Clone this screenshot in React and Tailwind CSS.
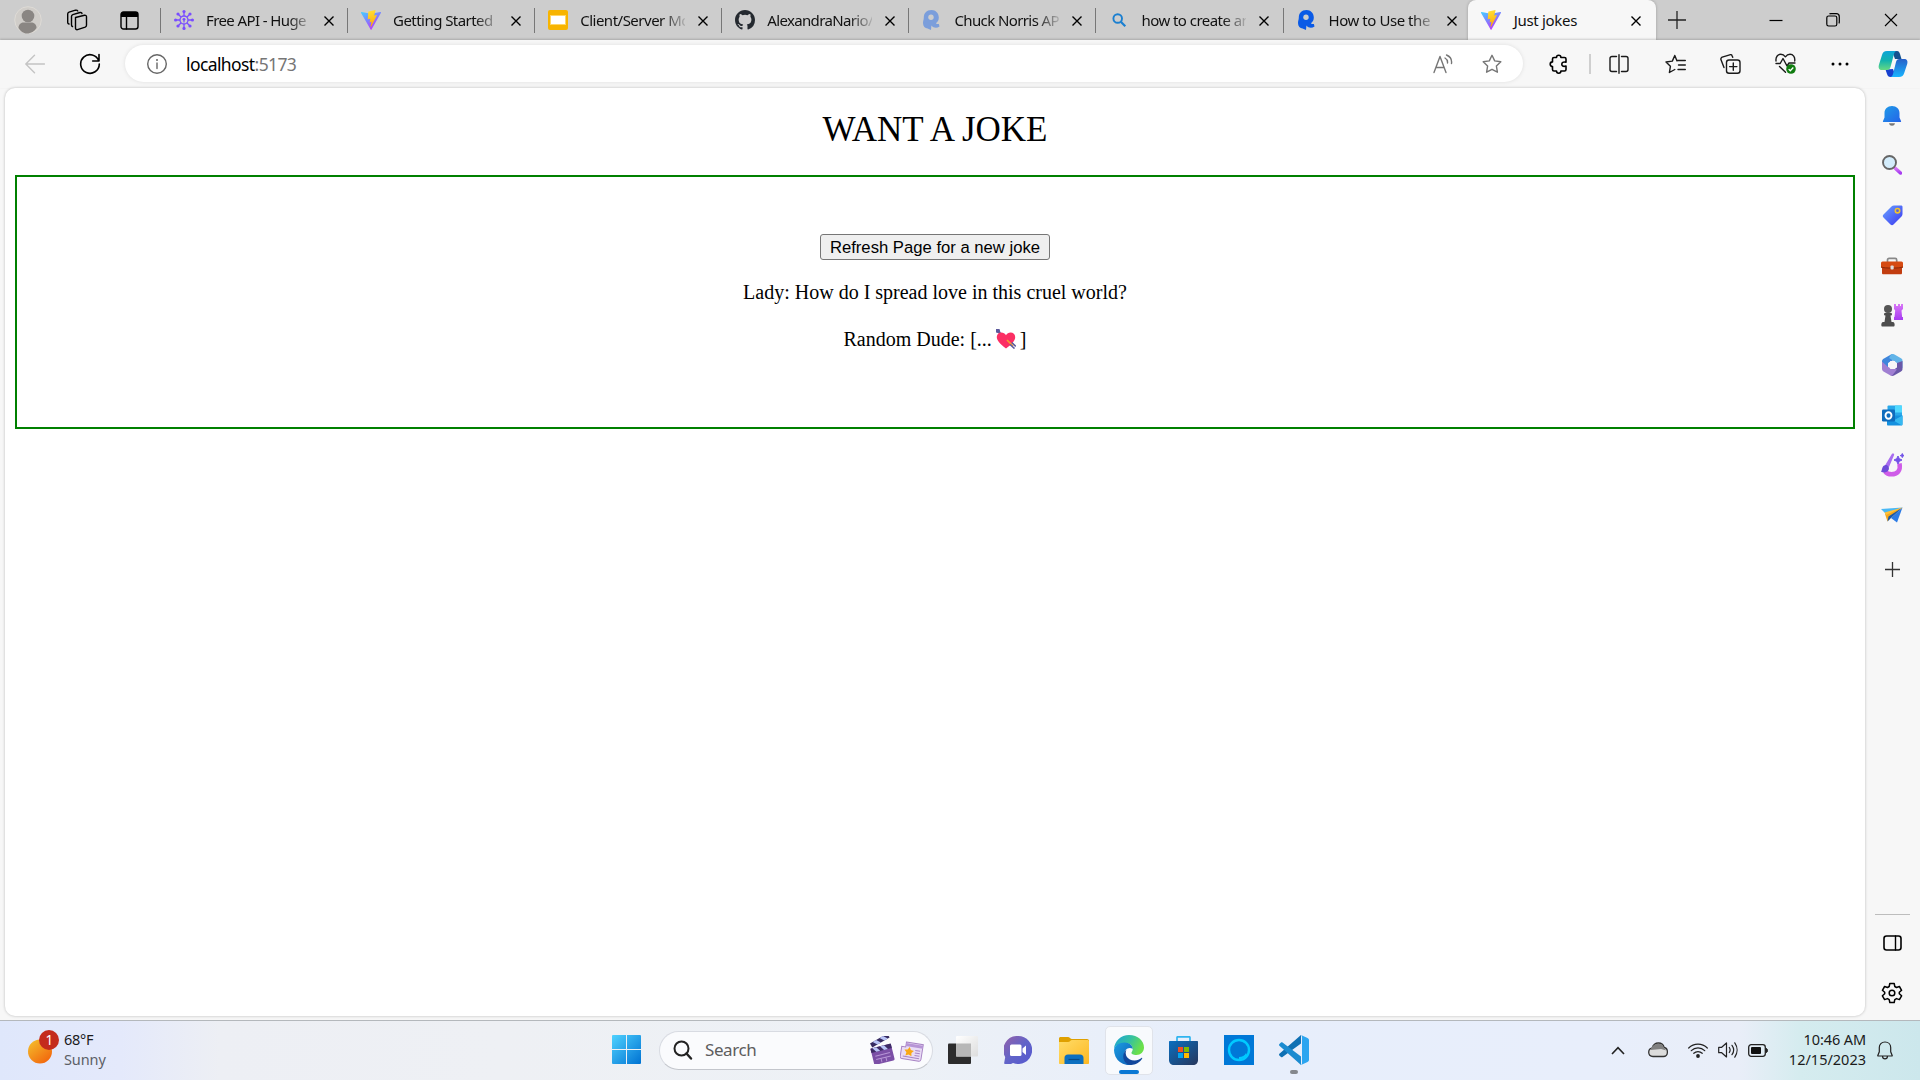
import React from "react";

const Icon = ({ w = 20, h = w, vb, className = "", children }) => (
  <svg
    width={w}
    height={h}
    viewBox={vb || `0 0 ${w} ${h}`}
    fill="none"
    stroke="none"
    className={"block shrink-0 " + className}
  >
    {children}
  </svg>
);

const line = { fill: "none", stroke: "currentColor", strokeWidth: 1.4, strokeLinecap: "round", strokeLinejoin: "round" };

const ViteIcon = ({ id }) => (
  <Icon w={20}>
    <defs>
      <linearGradient id={id + "a"} x1="0" y1="0" x2="0.6" y2="1">
        <stop offset="0" stopColor="#41d1ff" />
        <stop offset="1" stopColor="#bd34fe" />
      </linearGradient>
      <linearGradient id={id + "b"} x1="0.5" y1="0" x2="0.6" y2="1">
        <stop offset="0" stopColor="#ffdd35" />
        <stop offset="1" stopColor="#ffa800" />
      </linearGradient>
    </defs>
    <path d="M19.9 2.9 10.5 19.6a.5.5 0 0 1-.9 0L.1 2.9a.5.5 0 0 1 .5-.8l9.4 1.7 9.3-1.7a.5.5 0 0 1 .6.8z" fill={`url(#${id}a)`} />
    <path d="M14.3.1 7.5 1.4a.3.3 0 0 0-.2.3l-.5 7.2c0 .2.2.3.3.3l1.9-.4c.2 0 .4.1.3.3l-.6 2.8c0 .2.2.4.3.3l1.2-.4c.2 0 .4.2.3.3l-.9 4.4c0 .3.3.4.5.2l5.700-11.200c.1-.2 0-.4-.3-.4l-2 .4c-.2 0-.3-.1-.3-.3l1.300-4.500c.1-.2-.1-.6-.2-.6z" fill={`url(#${id}b)`} />
  </Icon>
);

const ApiIcon = () => (
  <Icon w={20}>
    <g stroke="#7a4dff" strokeWidth="1.3">
      <circle cx="10" cy="10" r="4" />
      <path d="M10 6V2M10 18v-4M6 10H2M18 10h-4M7.200 7.200 4 4M12.800 12.800 16 16M12.800 7.200 16 4M7.200 12.800 4 16" />
    </g>
    <g fill="#7a4dff">
      <circle cx="10" cy="9.300" r="1.400" />
      <path d="M9.400 10h1.200v2.400H9.400z" />
      {[[10, 1.6], [10, 18.4], [1.6, 10], [18.4, 10], [4, 4], [16, 16], [16, 4], [4, 16]].map(([x, y]) => (
        <circle key={x + "-" + y} cx={x} cy={y} r="1.600" />
      ))}
    </g>
  </Icon>
);

const SlidesIcon = () => (
  <Icon w={20}>
    <rect width="20" height="20" rx="2" fill="#f7b400" />
    <rect x="2" y="5" width="16" height="10" fill="#ffd666" />
    <rect x="3" y="6" width="14" height="8" fill="#fff" />
  </Icon>
);

const GithubIcon = () => (
  <Icon w={20} vb="0 0 16 16">
    <path
      fill="#24292f"
      d="M8 0C3.580 0 0 3.580 0 8c0 3.540 2.290 6.530 5.470 7.590.4.070.55-.170.55-.380 0-.190-.010-.820-.010-1.490-2.010.370-2.530-.490-2.690-.940-.090-.230-.480-.940-.820-1.130-.280-.150-.680-.520-.010-.530.630-.010 1.080.580 1.230.820.720 1.210 1.870.870 2.330.660.070-.520.280-.870.510-1.070-1.780-.200-3.640-.890-3.640-3.950 0-.870.310-1.590.820-2.150-.080-.200-.360-1.020.080-2.120 0 0 .670-.210 2.200.820a7.500 7.500 0 0 1 4 0c1.530-1.040 2.200-.820 2.200-.820.440 1.100.160 1.920.080 2.120.510.560.820 1.270.820 2.150 0 3.070-1.870 3.750-3.650 3.950.290.250.540.730.540 1.480 0 1.070-.010 1.930-.010 2.200 0 .210.150.460.550.380A8.010 8.010 0 0 0 16 8c0-4.420-3.580-8-8-8z"
    />
  </Icon>
);

const RapidIcon = ({ color }) => (
  <Icon w={20}>
    <path d="M9.500 0C4.500 0 1.800 3.300 1.800 7.500c0 2-.8 3.200-.8 5.500 0 3.500 2 5.200 4.600 5.400L9 20l.4-4.600c2 2.600 5.500 3 8.100 1l-.6-2.400c-1.200.3-2.300-.1-3-.8 2-1.400 2.900-3.400 2.900-5.700C16.800 3.300 13.800 0 9.500 0z" fill={color} />
    <circle cx="9" cy="7.200" r="2.700" fill="#cdcdcd" />
  </Icon>
);

const SearchTabIcon = () => (
  <Icon w={20}>
    <circle cx="8.700" cy="8.500" r="4.300" stroke="#1a7fd0" strokeWidth="1.900" />
    <path d="m12 12 4.300 4.300" stroke="#1a7fd0" strokeWidth="2.200" />
  </Icon>
);

const CloseX = () => (
  <Icon w={10} className="text-black">
    <path d="M.5.500 9.500 9.500M9.500.500.500 9.500" stroke="currentColor" strokeWidth="1.400" />
  </Icon>
);

const tabs = [
  { title: "Free API - Huge", icon: <ApiIcon />, track: "tracking-[-0.6px]" },
  { title: "Getting Started |", icon: <ViteIcon id="v1" />, track: "tracking-[-0.55px]" },
  { title: "Client/Server Mo", icon: <SlidesIcon />, track: "tracking-[-0.5px]" },
  { title: "AlexandraNario/", icon: <GithubIcon />, track: "tracking-[-0.65px]" },
  { title: "Chuck Norris AP", icon: <RapidIcon color="#7b9edb" />, track: "tracking-[-0.6px]" },
  { title: "how to create an", icon: <SearchTabIcon />, track: "tracking-[-0.55px]" },
  { title: "How to Use the", icon: <RapidIcon color="#0a5ae6" />, track: "tracking-[-0.45px]" },
];

function TabStrip() {
  return (
    <header className="flex h-10 shrink-0 bg-[#cdcdcd] text-[#111]">
      <div className="flex w-[160px] shrink-0 items-center pl-[14px]">
        <Icon w={28}>
          <circle cx="14" cy="14" r="13.300" fill="#d0cdc9" stroke="#dedbd6" />
          <circle cx="14" cy="10" r="6.300" fill="#8a8683" />
          <path d="M4.500 22c0-4 3-5.500 5-5.500h8c2 0 5 1.500 5 5.500-2 3-5.500 5.500-9.500 5.500S6.500 25 4.500 22z" fill="#8a8683" />
        </Icon>
        <Icon w={22} className="ml-[24px] text-black">
          <g {...line}>
            <path d="m9.500 8.500 9-2.200c1-.2 2 .3 2 1.500v8.500c0 1-.5 1.500-1.300 1.800l-7.700 2.500c-1 .3-2-.3-2-1.400z" />
            <path d="M6.500 17.500c-.7-.2-1-.8-1-1.500V7.500c0-1 .5-1.600 1.300-1.900L14 3.500c1-.2 1.800 0 2 1" />
            <path d="M3 15c-.8-.2-1.300-.8-1.300-1.500V5c0-1 .5-1.500 1.300-1.800L9.500 1.200c1-.2 1.800 0 2.300.8" />
          </g>
        </Icon>
        <Icon w={19} className="ml-[32px] text-black">
          <rect x="1" y="1" width="17" height="17" rx="2.500" {...line} />
          <path d="M1 3.500A2.500 2.500 0 0 1 3.500 1h12A2.500 2.500 0 0 1 18 3.500V6H1z" fill="currentColor" />
          <path d="M6.500 6v12" {...line} />
        </Icon>
      </div>
      {tabs.map((t) => (
        <div key={t.title} className="flex w-[187.100px] shrink-0 items-center">
          <div className="h-[25px] w-px shrink-0 bg-[#777]" />
          <div className="ml-[13px]">{t.icon}</div>
          <div className={"-mt-px ml-3 w-[105px] overflow-hidden whitespace-nowrap text-[15px] leading-6 [mask-image:linear-gradient(to_right,black_78%,rgba(0,0,0,0.15))] " + t.track}>
            {t.title}
          </div>
          <div className="ml-[13px] pt-px">
            <CloseX />
          </div>
        </div>
      ))}
      <div className="-ml-[2px] flex w-[188px] shrink-0 items-center rounded-t-[8px] bg-[#f7f7f7] pl-[13px] shadow-[0_0_3px_rgba(0,0,0,0.25)]">
        <ViteIcon id="v2" />
        <div className="-mt-px ml-[13px] w-[103px] text-[15px] leading-6 tracking-[-0.3px]">Just jokes</div>
        <div className="ml-[14px] pt-px">
          <CloseX />
        </div>
      </div>
      <div className="-mt-px flex flex-1 items-center pl-[12px]">
        <Icon w={18}>
          <path d="M9 0v18M0 9h18" stroke="#222" strokeWidth="1.300" />
        </Icon>
        <Icon w={14} className="ml-[83px]">
          <path d="M.5 7.500h13" stroke="#000" strokeWidth="1.200" />
        </Icon>
        <Icon w={14} className="ml-[43px]">
          <rect x=".8" y="3" width="10" height="10" rx="1.800" stroke="#000" strokeWidth="1.200" />
          <path d="M3.500 1.200c.3-.4.8-.5 1.300-.5h5.500c1.700 0 3 1.300 3 3V9c0 .5-.1 1-.5 1.400" stroke="#000" strokeWidth="1.200" />
        </Icon>
        <Icon w={14} className="ml-[44px]">
          <path d="m1 1 12 12M13 1 1 13" stroke="#000" strokeWidth="1.100" />
        </Icon>
      </div>
    </header>
  );
}

const STAR = "m10 1.300 2.700 5.600 6.100.9-4.400 4.300 1 6.100L10 15.300l-5.400 2.900 1-6.100L1.200 7.800l6.100-.9z";

function Toolbar() {
  return (
    <div className="flex h-12 shrink-0 items-center bg-[#f7f7f7] pb-px text-[#1a1a1a] shadow-[0_-1px_2px_rgba(0,0,0,0.18)]">
      <Icon w={20} className="ml-[25px] text-[#c4c4c4]">
        <path d="M19.500 10H1M9.500 1.300.8 10l8.700 8.700" {...line} />
      </Icon>
      <Icon w={22} className="ml-[34px] text-black">
        <path d="M19.800 8A9.300 9.300 0 1 0 20.300 11M20 1.500V8h-6.300" {...line} strokeWidth="1.600" />
      </Icon>
      <div className="ml-[24px] flex h-[37px] w-[1398px] shrink-0 items-center rounded-full bg-white shadow-[0_0_4px_rgba(0,0,0,0.1)]">
        <Icon w={20} className="ml-[22px] text-[#666]">
          <circle cx="10" cy="10" r="9.300" {...line} />
          <path d="M10 9v5.500" {...line} />
          <circle cx="10" cy="6" r="1" fill="currentColor" />
        </Icon>
        <div className="ml-[19px] w-[120px] whitespace-nowrap text-[17.500px] leading-6 tracking-[-0.6px] text-[#767676]">
          <span className="text-black">localhost</span>:5173
        </div>
        <Icon w={20} className="ml-auto text-[#767676]">
          <path d="m1 18.500 6-16 6 16M3 13.500h8" {...line} />
          <path d="M12 4c1.800 1 2.700 3 2.500 5M13.500 1c3.500 1.500 5.500 5 5 8.500" {...line} />
        </Icon>
        <Icon w={20} className="ml-[29px] mr-[21px] text-[#767676]">
          <path d={STAR} {...line} />
        </Icon>
      </div>
      <Icon w={20} className="ml-[26px] text-black">
        <path d="M7.500 3.500a2.200 2.200 0 0 1 4.400 0h3.600c.8 0 1.500.7 1.500 1.500v3.300c-3-1-4.200.4-4.200 1.900s1.200 2.800 4.200 1.800v3.500c0 .8-.7 1.500-1.500 1.500h-3.600a2.200 2.200 0 0 1-4.400 0H5c-.8 0-1.500-.7-1.500-1.500v-3a2.200 2.200 0 0 1 0-4.600V5c0-.8.7-1.500 1.500-1.500z" {...line} strokeWidth="1.600" />
      </Icon>
      <div className="ml-5 h-5 w-[1.500px] bg-[#cfcfcf]" />
      <Icon w={20} className="ml-[18px]">
        <path d="M7.500 2.500H3A2 2 0 0 0 1 4.500v11a2 2 0 0 0 2 2h4.500M12.500 2.500H17a2 2 0 0 1 2 2v11a2 2 0 0 1-2 2h-4.500M10 .8v18.400" {...line} />
      </Icon>
      <Icon w={21} h={20} className="ml-[36px]">
        <path d="M12 6.900 9.800 1.500 7.300 7.100 1 8l4.400 4.300-1 6.200 5.400-3M12 6.500h8.300M13.500 11h6.800M13 15.500h7.300" {...line} />
      </Icon>
      <Icon w={21} h={20} className="ml-[34px]">
        <rect x="6.500" y="6" width="13.500" height="13.300" rx="2.500" {...line} />
        <path d="M13.300 9v7.300M9.600 12.600h7.300M4 13.500 1 5.700c-.4-1 .2-2.200 1.200-2.600L9.700.8c1-.3 2.200.2 2.500 1.200l.5 1.300" {...line} />
      </Icon>
      <Icon w={21} h={21} className="ml-[34px]">
        <path d="M1 8C.5 3.500 3 1.300 5.800 1.300c2.200 0 3.500 1 4.600 2.500C11.500 2.300 13 1.300 15 1.300c3 0 5.300 2.500 4.700 6.700M1 10.500h4.200L8 5.500l4 7.500 2-3h6M4.500 13.500l6 5.700" {...line} />
        <circle cx="16" cy="16" r="4.800" fill="#107c10" />
        <path d="m13.700 16.100 1.600 1.600 3-3.200" stroke="#fff" strokeWidth="1.300" />
      </Icon>
      <Icon w={20} className="ml-[34px] text-black">
        <circle cx="3" cy="10" r="1.500" fill="currentColor" />
        <circle cx="10" cy="10" r="1.500" fill="currentColor" />
        <circle cx="17" cy="10" r="1.500" fill="currentColor" />
      </Icon>
      <Icon w={30} h={28} className="ml-[28px]">
        <defs>
          <linearGradient id="cp1" x1="0" y1="0" x2="0" y2="1">
            <stop offset="0" stopColor="#0ba4d8" />
            <stop offset=".5" stopColor="#12b3ae" />
            <stop offset="1" stopColor="#66d983" />
          </linearGradient>
          <linearGradient id="cp2" x1="0" y1="0" x2="0" y2="1">
            <stop offset="0" stopColor="#2860c8" />
            <stop offset="1" stopColor="#18b4ff" />
          </linearGradient>
        </defs>
        <path d="M7 1h12c2 0 2.500 1.500 3 3l1.500 5H17L14 1z" fill="#14528f" />
        <path d="M7.500 19.500 9 24c.6 2 1.500 3 3.500 3H18l-3-8z" fill="#1740cf" />
        <path d="M9 1h10c-2 0-2.600 1.500-3 3l-3.500 13c-.5 2-1.500 3-3.500 3H4c-3 0-4-2-3-5.500L4 5c.8-2.800 2-4 5-4z" fill="url(#cp1)" />
        <path d="M21 27H12c2 0 2.600-1.500 3-3l3-12c.5-2 1.500-3 3.500-3H26c3 0 4 2 3.200 5l-3 9c-.8 2.800-2.200 4-5.200 4z" fill="url(#cp2)" />
      </Icon>
    </div>
  );
}

function ArrowHeart() {
  return (
    <Icon w={20} className="mx-[4px] inline-block! align-[-3px]">
      <path d="M1 1 8 8" stroke="#5c5a9c" strokeWidth="1.600" />
      <path d="M0 0h3.500l1 3.500L3.500 4.500 0 3.500z" fill="#5c5a9c" />
      <path d="M10 19.500C3.500 14.500.6 11 .8 7.700 1 5 3 3.500 5.300 3.500c2 0 3.600 1 4.700 2.800 1.100-1.800 2.600-2.800 4.600-2.800 2.600 0 4.500 1.700 4.600 4.400.1 3.200-2.700 6.600-9.200 11.600z" fill="#fb2f64" />
      <path d="m11 11 6 6" stroke="#f79a2e" strokeWidth="1.700" />
      <path d="m14 15.500 4.500 4M15.800 13.500l4 4" stroke="#5c5a9c" strokeWidth="1.600" />
    </Icon>
  );
}

function Page() {
  return (
    <main className="ml-[5px] flex w-[1860px] shrink-0 flex-col rounded-[10px] bg-white px-[10px] font-['Liberation_Serif',serif] text-black shadow-[0_0_3px_rgba(0,0,0,0.25)]">
      <h1 className="pt-[20px] text-center text-[35px] leading-[44px]">WANT A JOKE</h1>
      <section className="mt-[23px] flex h-[254px] flex-col items-center border-2 border-[#008000] pt-[57px] text-[20px] leading-[23px]">
        <button className="h-[26px] w-[230px] whitespace-nowrap rounded-[3px] border border-[#767676] bg-[#efefef] font-['Liberation_Sans',sans-serif] text-[16.667px] leading-[23px]">
          Refresh Page for a new joke
        </button>
        <p className="mt-[21px]">Lady: How do I spread love in this cruel world?</p>
        <p className="mt-6 whitespace-nowrap">
          Random Dude: [...
          <ArrowHeart />]
        </p>
      </section>
    </main>
  );
}

const sideIcons = [
  <Icon key="bell" w={20}>
    <path d="M10 0C5.500 0 2.500 3 2.500 7v4.500L1 15c-.3.700 0 1 .6 1h16.800c.6 0 .9-.3.600-1l-1.500-3.500V7c0-4-3-7-7.500-7z" fill="url(#sbBlue)" />
    <path d="M7 17.200h6c-.3 1.700-1.500 2.500-3 2.500s-2.700-.8-3-2.500z" fill="#777" />
  </Icon>,
  <Icon key="search" w={20} className="mb-[2px]">
    <path d="m13 13 5.500 5" stroke="url(#sbPink)" strokeWidth="3.500" strokeLinecap="round" />
    <circle cx="7.500" cy="7.500" r="6.500" fill="#d3ecfb" stroke="#666" strokeWidth="1.900" />
  </Icon>,
  <Icon key="tag" w={21}>
    <path d="M12 .5h7c1 0 1.500.5 1.500 1.500v7c0 1-.3 1.700-1 2.400l-8 8c-1 1-2 1-3 0l-7-7c-1-1-1-2 0-3l8-8c.7-.6 1.500-.9 2.500-.9z" fill="url(#sbTag)" />
    <circle cx="15.500" cy="5.700" r="2.200" fill="#5a63d8" stroke="#f2c32c" strokeWidth="1.600" />
  </Icon>,
  <Icon key="toolbox" w={22} h={18}>
    <path d="M6.500 5V3c0-1 .6-1.600 1.600-1.600h6c1 0 1.600.6 1.600 1.600v2" stroke="#888" strokeWidth="1.700" />
    <rect y="4.500" width="22" height="6.500" rx="1.500" fill="#d64a12" />
    <path d="M1 10.500h20V16c0 .8-.5 1.300-1.300 1.300H2.300C1.500 17.300 1 16.800 1 16z" fill="#c23d10" />
    <path d="M0 10c4 1.500 18 1.500 22 0" stroke="#8e2a08" />
    <rect x="9.500" y="8.500" width="3.200" height="4" rx="1" fill="#ddd" />
  </Icon>,
  <Icon key="chess" w={22} h={23}>
    <path d="M13 0h2v2h2V0h2v2h1V0h2v5l-1.500 1.500.6 6.500H22v3h-9v-3h.5l.7-6.500L13 5z" fill="url(#sbPink)" />
    <circle cx="7" cy="5" r="4" fill="#555" />
    <path d="M3 9.500c0-1 8-1 8 0v1c0 1-1.500 1-1.500 1L10.500 18h1.500c2 0 2 4.500 1 4.500H1c-1 0-1-4.500 1-4.500h1.500l1-6.500S3 11.500 3 10.500z" fill="#4d4d4d" />
  </Icon>,
  <Icon key="m365" w={21} h={22}>
    <path d="M9 0.500 2 4.500C.7 5.200 0 6 0 7.500V15l6 1.500V9l9-5-3-3.200C11 0 10 0 9 .5z" fill="#3f86dc" />
    <path d="M9 .5c1.200-.7 2.300-.6 3.500 0L19 4.300c1 .6 1.500 1.400 1.500 2.700v7L15 12V9L7 4z" fill="#62b4e8" />
    <path d="M20.500 7v8c0 1-.6 2-1.500 2.500l-7 4c-1 .5-2 .5-3 0l-2.500-3 8.500-5V9z" fill="#6a58a8" />
    <path d="M0 14.500V7.500L6 13l9 2.500-5 6.200c-.6 0-1 0-1.500-.3l-7-4C.5 17 0 16 0 14.500z" fill="#a07fd2" />
    <path d="M8.300 7h4.500l2.200 4-2.200 4H8.300L6 11z" fill="#f7f7f7" />
  </Icon>,
  <Icon key="outlook" w={21}>
    <rect x="5.500" y=".5" width="14.500" height="16" rx="1" fill="#28a8ea" />
    <path d="M13 .5h7v7h-7z" fill="#50d9ff" />
    <path d="M5 10.500h15.500V19c0 .8-.5 1.500-1.500 1.500H6c-.6 0-1-.5-1-1z" fill="#1490df" />
    <path d="m20.500 10.500-9 5 8.500 5c.3-.3.500-.8.500-1.500z" fill="#36b9f1" />
    <rect y="4.500" width="13" height="12" rx="1.200" fill="#0f6cbd" />
    <ellipse cx="6.500" cy="10.500" rx="3" ry="3.300" stroke="#fff" strokeWidth="1.900" />
  </Icon>,
  <Icon key="designer" w={23} h={24}>
    <path d="M18.500 10.500C20 18 16 21.300 10.500 21.300c-3 0-5-1-6.500-3" stroke="#cf5ce8" strokeWidth="4.500" />
    <path d="M11 .8c1.500-1 2.700.3 2 1.500L8 14l-4-1.500z" fill="#a86cf0" />
    <path d="M4.500 12c3 0 4 2.500 3.200 4.800C6.500 19.500 3 20 0 18.800c1.500-2 .5-6 4.500-6.800z" fill="#6d4bd8" />
    <path d="m17 3 1.300 2.700L21 7l-2.700 1.300L17 11l-1.300-2.700L13 7l2.700-1.300zM21.300.5l.5 1.500 1.500.6-1.500.5-.5 1.500-.6-1.500-1.500-.5 1.500-.6z" fill="#7253e8" stroke="#7253e8" strokeWidth="1" />
  </Icon>,
  <Icon key="drop" w={22} h={16}>
    <path d="M21.500.5 0 2l5 5z" fill="#49b8f5" />
    <path d="M21.500.5 16 15.500 10 11z" fill="#2c7be5" />
    <path d="M21.500.5 4 7l2.500 7.500L9 10.500z" fill="#f5a81c" />
    <path d="m6.500 14.500 1-5L21.500.5 10 11z" fill="#1b58a8" />
    <path d="M21.500.5 3.500 5.500 5 8z" fill="#ffc13d" />
  </Icon>,
];

function Sidebar() {
  return (
    <aside className="flex flex-1 flex-col items-center pr-px pt-[3px]">
      <svg width="0" height="0" className="absolute">
        <defs>
          <linearGradient id="sbBlue" x1="0" y1="0" x2="1" y2="1">
            <stop offset="0" stopColor="#1f9ce8" />
            <stop offset="1" stopColor="#2463e8" />
          </linearGradient>
          <linearGradient id="sbPink" x1="0" y1="0" x2="0" y2="1">
            <stop offset="0" stopColor="#d977f7" />
            <stop offset="1" stopColor="#a63cf0" />
          </linearGradient>
          <linearGradient id="sbTag" x1="0" y1="0" x2="1" y2="1">
            <stop offset="0" stopColor="#6aa5ff" />
            <stop offset="1" stopColor="#3a35f0" />
          </linearGradient>
        </defs>
      </svg>
      {sideIcons.map((ic) => (
        <div key={ic.key} className="flex h-[49.900px] w-full shrink-0 items-center justify-center">
          {ic}
        </div>
      ))}
      <Icon w={15} className="mt-[22px]">
        <path d="M7.500 0v15M0 7.500h15" stroke="#333" strokeWidth="1.300" />
      </Icon>
      <div className="mt-auto h-px w-[35px] bg-[#bdbdbd]" />
      <Icon w={19} h={16} className="mt-[20px] text-black">
        <rect x="1" y="1" width="17" height="14" rx="2.500" {...line} strokeWidth="1.600" />
        <path d="M12.500 1v14" {...line} />
      </Icon>
      <Icon w={22} vb="0 0 22 22" className="mb-[12px] mt-[31px] text-black">
        <path
          d="M8.800 1.500h4.400l.6 3 1.700 1 2.900-1 2.200 3.800-2.300 2v1.500l2.300 2-2.200 3.800-2.900-1-1.700 1-.6 2.900H8.800l-.6-2.900-1.700-1-2.900 1-2.200-3.800 2.300-2v-1.500l-2.300-2 2.200-3.800 2.900 1 1.700-1z"
          {...line}
          strokeWidth="1.500"
        />
        <circle cx="11" cy="11" r="2.800" {...line} strokeWidth="1.500" />
      </Icon>
    </aside>
  );
}

function Taskbar() {
  return (
    <footer className="flex h-[60px] shrink-0 items-center border-t border-[#b4b8bc] bg-[linear-gradient(90deg,#dfe7fb_0px,#e4e9fb_120px,#edeff4_220px,#eef0f4_500px,#edf1f6_900px,#e7eefb_1200px,#e8eefb_1600px,#e9eef8_1740px,#d5ecef_1800px,#cce7ec_1920px)] pb-px text-[15px] leading-5 text-[#1b1b1b]">
      <div className="flex w-[612px] shrink-0 items-center pl-[27px]">
        <Icon w={33} h={35} className="-mt-[8px]">
          <defs>
            <linearGradient id="sun" x1="0" y1="0" x2=".8" y2="1">
              <stop offset="0" stopColor="#f4c32e" />
              <stop offset="1" stopColor="#f2640c" />
            </linearGradient>
          </defs>
          <circle cx="13" cy="22.500" r="12" fill="url(#sun)" />
          <circle cx="22" cy="11" r="10" fill="#c42b1c" />
          <text x="22.300" y="16" textAnchor="middle" fontSize="13.500" fill="#fff" fontFamily="Noto Sans, sans-serif">1</text>
        </Icon>
        <div className="-mt-[3px] ml-[4px] text-[14.500px] tracking-[-0.1px]">
          <div className="tracking-[-0.3px]">68°F</div>
          <div className="text-[#5c5f66]">Sunny</div>
        </div>
      </div>
      <Icon w={30} className="-mr-px">
        <defs>
          <linearGradient id="win" gradientUnits="userSpaceOnUse" x1="0" y1="0" x2="29" y2="29">
            <stop offset="0" stopColor="#4fd2ff" />
            <stop offset="1" stopColor="#0072d2" />
          </linearGradient>
        </defs>
        <path d="M1 0h13v14H0V1a1 1 0 0 1 1-1zM15 0h13a1 1 0 0 1 1 1v13H15zM0 15h14v14H1a1 1 0 0 1-1-1zM15 15h14v13a1 1 0 0 1-1 1H15z" fill="url(#win)" />
      </Icon>
      <div className="ml-[18px] flex h-[39px] w-[274px] shrink-0 items-center rounded-full border border-[#d8dbe2] border-b-[#c3c6cc] bg-[#fafbfd]">
        <Icon w={20} className="ml-[13px]">
          <circle cx="8.500" cy="8.500" r="7" stroke="#222" strokeWidth="2" />
          <path d="m13.500 13.500 4.500 5" stroke="#222" strokeWidth="2.400" strokeLinecap="round" />
        </Icon>
        <div className="ml-[12px] text-[17px] tracking-[-0.4px] text-[#5d5d5d]">Search</div>
        <Icon w={26} h={28} className="ml-auto">
          <g transform="rotate(-14 13 18)">
            <rect x="3" y="10" width="21" height="17" rx="1.500" fill="#7b4fa6" />
            <rect x="3" y="10" width="21" height="4.500" fill="#3d2b66" />
            <path d="m5 10 3 4.500h4L9 10zM13 10l3 4.500h4L17 10z" fill="#b9c4f7" />
            <path d="M6 18.500h15M6 22h15M11 22v4M16 22v4" stroke="#b795d6" />
          </g>
          <g transform="rotate(-30 3 11)">
            <rect x="3" y="7" width="20" height="4.500" fill="#352a61" />
            <path d="m6 7 3 4.500h4L10 7zM14 7l3 4.500h4L18 7z" fill="#b9c4f7" />
          </g>
        </Icon>
        <Icon w={24} className="ml-[5px] mr-[8px] mt-[3px]">
          <g transform="rotate(9 12 12)">
            <path d="M5 3h17v15a2 2 0 0 1-2 2H3a2 2 0 0 1-2-2V8h4z" fill="#e9dcf5" stroke="#a884c4" />
            <path d="M5 4h17v3H5z" fill="#b795d6" />
            <path d="M15 10h5M15 12.500h5M15 15h5M3.500 17.500H20" stroke="#a884c4" />
            <path d="m9 7.500 1.600 2.800 3.200.5-2.200 2.400.5 3.200L9 15l-3 1.400.5-3.200-2.300-2.400 3.200-.5z" fill="#f9a814" />
          </g>
        </Icon>
      </div>
      <Icon w={31} h={28} className="ml-[15px]">
        <defs>
          <linearGradient id="tvw" x1="0" y1="0" x2="1" y2="1">
            <stop offset="0" stopColor="#fff" />
            <stop offset="1" stopColor="#ddd" />
          </linearGradient>
        </defs>
        <rect y="7.500" width="23" height="20.500" rx="1" fill="#2c2c2c" />
        <rect x="8" y="0" width="22" height="20.500" rx="1" fill="url(#tvw)" />
        <path d="M8 7.500h15v13H8z" fill="#b7b7b7" />
      </Icon>
      <Icon w={28} className="ml-[25px]">
        <defs>
          <linearGradient id="chat" x1="0" y1="0" x2="1" y2="1">
            <stop offset="0" stopColor="#9560a8" />
            <stop offset=".5" stopColor="#6264c8" />
            <stop offset="1" stopColor="#5558d0" />
          </linearGradient>
        </defs>
        <path d="M14 0a14 14 0 1 1-5 27l-2 1H1c-1 0-1-.5-.8-1.300l1-5.700A14 14 0 0 1 14 0z" fill="url(#chat)" />
        <rect x="6" y="8.500" width="11.500" height="11.500" rx="1.500" fill="#fff" />
        <path d="m18.500 12.500 3.500-3v9.500l-3.500-3z" fill="#fff" />
      </Icon>
      <Icon w={30} h={27} className="ml-[27px]">
        <defs>
          <linearGradient id="fold" x1="0" y1="0" x2="1" y2="1">
            <stop offset="0" stopColor="#ffdc68" />
            <stop offset="1" stopColor="#fdb822" />
          </linearGradient>
        </defs>
        <path d="M0 1.500C0 .7.700 0 1.500 0H9c1.500 0 2.500 2 4 2h15c1.200 0 2 .8 2 2v8H0z" fill="#dfa000" />
        <path d="M0 5h9c2 0 2.500-2 4-2h15.500c.8 0 1.500.7 1.500 1.500V26c0 .6-.4 1-1 1H1c-.6 0-1-.4-1-1z" fill="url(#fold)" />
        <path d="M5.500 27v-6c0-2 1.200-3.500 3.500-3.500h12c2.300 0 3.500 1.500 3.500 3.500v6z" fill="#0c6fc0" />
        <path d="M9.500 22.500h11" stroke="#064a88" strokeWidth="1.200" />
      </Icon>
      <div className="ml-4 flex h-[49px] w-[48px] shrink-0 flex-col items-center rounded-[5px] border border-[#e0e3ea] bg-[#f8fafd] pt-[8px]">
        <Icon w={30}>
          <defs>
            <linearGradient id="ed1" x1="0" y1="0" x2="1" y2=".4">
              <stop offset="0" stopColor="#1ba2dc" />
              <stop offset=".55" stopColor="#35c1a0" />
              <stop offset="1" stopColor="#6be04a" />
            </linearGradient>
            <linearGradient id="ed2" x1="0" y1="0" x2="1" y2="1">
              <stop offset="0" stopColor="#1b9de2" />
              <stop offset="1" stopColor="#0f5db5" />
            </linearGradient>
          </defs>
          <path d="M0 14C.5 6 7 0 15 0c9 0 15 6 15 12.500 0 4.500-3.500 7.500-7.500 7.500-3.500 0-5.500-1.300-5-2.500 3-3.500.5-9.500-6-9.500C6 8 1.500 10.500 0 14z" fill="url(#ed1)" />
          <path d="M0 15C.5 10.500 5 7.500 10.500 7.500c5 0 8 3 8.300 6.300C14 11 10 15 10.500 20c.4 5 4.500 8.500 8.500 9.500A15 15 0 0 1 0 15z" fill="url(#ed2)" />
          <path d="M12.500 14.500c-2.500 5 1 11 8 11 3 0 5-1 7-2.500.6-.4 1 .1.700.6-2.500 4-6.500 6.400-11.500 6.400C8.500 29 7 19 12.500 14.500z" fill="#11479c" />
        </Icon>
        <div className="mt-[5px] h-1 w-5 shrink-0 rounded-full bg-[#0a78d4]" />
      </div>
      <Icon w={29} className="ml-4">
        <defs>
          <linearGradient id="store" x1="0" y1="0" x2="1" y2="1">
            <stop offset="0" stopColor="#0a6fc0" />
            <stop offset="1" stopColor="#27365c" />
          </linearGradient>
        </defs>
        <path d="M8 6V1.500C8 1 8.300.8 8.800.8h11.400c.5 0 .8.200.8.700V6" stroke="#2fb4ef" strokeWidth="1.700" />
        <path d="M0 6c0-.6.400-1 1-1h27c.6 0 1 .4 1 1v18c0 3-2 5-5 5H5c-3 0-5-2-5-5z" fill="url(#store)" />
        <path d="M9 11h5v5H9z" fill="#f25022" />
        <path d="M15 11h5v5h-5z" fill="#7fba00" />
        <path d="M9 17h5v5H9z" fill="#00a4ef" />
        <path d="M15 17h5v5h-5z" fill="#ffb900" />
      </Icon>
      <Icon w={30} className="ml-[26px]">
        <path d="M0 0h30v30H0z" fill="#0078d7" />
        <circle cx="15" cy="15" r="10" stroke="#00caff" strokeWidth="2.400" />
        <path d="M15 25.500v-3.500c3 0 6-1.500 7-4L23 21z" fill="#00caff" />
      </Icon>
      <div className="ml-[25px] flex h-[49px] shrink-0 flex-col items-center pt-[9px]">
        <Icon w={30}>
          <path d="M22 0v8.500L3.500 22c-.5.400-1 .4-1.500 0L.4 20.500c-.5-.5-.5-1.200 0-1.700z" fill="#0f70b3" />
          <path d="M22 30v-8.500L3.500 7.500C3 7.100 2.500 7.100 2 7.500L.4 9c-.5.500-.5 1.200 0 1.700z" fill="#1b8bd0" />
          <path d="m22 0 6.500 3c1 .5 1.500 1.200 1.500 2.200v19.600c0 1-.5 1.700-1.500 2.200l-6.500 3c1-1 1-1.500 1-2.500V2.500c0-1-.2-1.700-1-2.500z" fill="#2ba5f0" />
        </Icon>
        <div className="mt-[5px] h-1 w-2 shrink-0 rounded-full bg-[#85888d]" />
      </div>
      <Icon w={14} h={9} className="ml-auto">
        <path d="m1 8 6-6.300L13 8" stroke="#222" strokeWidth="1.600" />
      </Icon>
      <Icon w={20} h={16} className="ml-[23px]">
        <path d="M5 14.500C2 14.500.7 12.500.7 10.300.7 8 2.300 6.500 4 6.200 5 3 7.500 1 10.500 1c3 0 5 2 5.700 4.500 2 .3 3.200 2 3.200 4.500 0 2.700-1.500 4.500-4 4.500z" fill="#dcdcdc" stroke="#333" strokeWidth="1.300" />
        <path d="M2.500 8C3.500 4 6.500 1.700 10.500 1.700c3 0 4.700 1.500 5.500 4.300l2.500 2.500L13 7z" fill="#808080" />
      </Icon>
      <Icon w={20} h={16} className="ml-[20px]">
        <g stroke="#222" strokeWidth="1.200" strokeLinecap="round">
          <path d="M.7 6a13 13 0 0 1 18.600 0M3.300 8.700a9.300 9.300 0 0 1 13.400 0M5.800 11.300a6 6 0 0 1 8.400 0" />
        </g>
        <circle cx="10" cy="14" r="1.900" fill="#222" />
      </Icon>
      <Icon w={20} h={18} className="ml-[10px]">
        <g stroke="#222" strokeWidth="1.200" strokeLinecap="round" strokeLinejoin="round">
          <path d="M.7 6.300h3L8.500 2v14l-4.800-4.300h-3zM11.300 6.500c1 1.500 1 3.500 0 5M14 4.300c2 2.800 2 6.600 0 9.400M16.800 1.800c3 4.300 3 10.100 0 14.400" />
        </g>
      </Icon>
      <Icon w={20} h={13} className="ml-[10px]">
        <rect x=".7" y=".7" width="16.600" height="11.600" rx="2.500" stroke="#222" strokeWidth="1.300" />
        <rect x="3" y="3" width="10" height="7" rx="1" fill="#111" />
        <path d="M18 4.500c2 0 2 4 0 4z" fill="#222" stroke="#222" />
      </Icon>
      <div className="-mt-[3px] w-[98px] text-right text-[14.500px]">
        <div className="whitespace-nowrap tracking-[-0.1px]">10:46 AM</div>
        <div className="whitespace-nowrap">12/15/2023</div>
      </div>
      <Icon w={16} h={19} className="ml-[11px] mr-[27px]">
        <path d="M8 1C4.500 1 2.300 3.500 2.300 6.500v4.300L.8 14.500c-.1.300 0 .5.400.5h13.600c.4 0 .5-.2.400-.5l-1.500-3.700V6.500C13.700 3.500 11.500 1 8 1zM5.500 15.200c.2 3.500 4.800 3.500 5 0" stroke="#222" strokeWidth="1.200" />
      </Icon>
    </footer>
  );
}

export default function App() {
  return (
    <div className="flex h-[1080px] w-[1920px] flex-col overflow-hidden bg-[#f7f7f7] font-['Noto_Sans','Open_Sans',sans-serif]">
      <TabStrip />
      <Toolbar />
      <div className="flex h-[928px] shrink-0">
        <Page />
        <Sidebar />
      </div>
      <div className="h-1 shrink-0" />
      <Taskbar />
    </div>
  );
}
